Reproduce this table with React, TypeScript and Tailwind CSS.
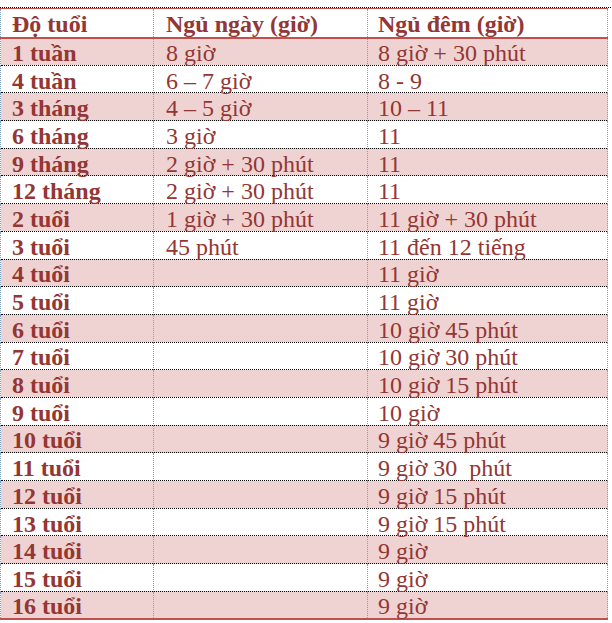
import React from 'react';

const rows: [string, string, string][] = [
  ['1 tuần', '8 giờ', '8 giờ + 30 phút'],
  ['4 tuần', '6 – 7 giờ', '8 - 9'],
  ['3 tháng', '4 – 5 giờ', '10 – 11'],
  ['6 tháng', '3 giờ', '11'],
  ['9 tháng', '2 giờ + 30 phút', '11'],
  ['12 tháng', '2 giờ + 30 phút', '11'],
  ['2 tuổi', '1 giờ + 30 phút', '11 giờ + 30 phút'],
  ['3 tuổi', '45 phút', '11 đến 12 tiếng'],
  ['4 tuổi', '', '11 giờ'],
  ['5 tuổi', '', '11 giờ'],
  ['6 tuổi', '', '10 giờ 45 phút'],
  ['7 tuổi', '', '10 giờ 30 phút'],
  ['8 tuổi', '', '10 giờ 15 phút'],
  ['9 tuổi', '', '10 giờ'],
  ['10 tuổi', '', '9 giờ 45 phút'],
  ['11 tuổi', '', '9 giờ 30\u00a0 phút'],
  ['12 tuổi', '', '9 giờ 15 phút'],
  ['13 tuổi', '', '9 giờ 15 phút'],
  ['14 tuổi', '', '9 giờ'],
  ['15 tuổi', '', '9 giờ'],
  ['16 tuổi', '', '9 giờ'],
];

export default function App() {
  return (
    <div className="min-h-[623px] bg-white pt-[7px] text-[#943634] font-['Liberation_Serif','Times_New_Roman',serif] text-[24px] leading-[20px]">
      <div className="w-[611px] border-t border-dotted border-black" />
      <table className="w-[607px] table-fixed border-collapse">
        <colgroup>
          <col className="w-[153px]" />
          <col className="w-[214px]" />
          <col className="w-[240px]" />
        </colgroup>
        <thead>
          <tr className="h-[29px] border-t border-solid border-t-[#c0504d] border-b-2 border-b-[#c0504d]">
            <th className="text-left font-bold pl-[11px] pt-[2px] border-l border-dotted border-l-[#7f9fcf]">Độ tuổi</th>
            <th className="text-left font-bold pl-[12px] pt-[2px] border-l border-dotted border-l-[#7f9fcf]">Ngủ ngày (giờ)</th>
            <th className="text-left font-bold pl-[10px] pt-[2px] border-l border-r border-dotted border-l-[#7f9fcf] border-r-[#7f9fcf]">Ngủ đêm (giờ)</th>
          </tr>
        </thead>
        <tbody>
          {rows.map((r, i) => {
            const last = i === rows.length - 1;
            return (
              <tr
                key={i}
                className={`h-[27.7px] ${i % 2 === 0 ? 'bg-[#efd3d2]' : 'bg-white'} ${
                  last ? 'border-b-2 border-solid border-b-[#c0504d]' : 'border-b border-dotted border-b-black'
                }`}
              >
                <td className="font-bold pl-[11px] pt-[3px] border-l border-dotted border-l-[#7f9fcf]">{r[0]}</td>
                <td className="pl-[12px] pt-[3px] border-l border-dotted border-l-[#7f9fcf]">{r[1]}</td>
                <td className="pl-[10px] pt-[3px] border-l border-r border-dotted border-l-[#7f9fcf] border-r-[#7f9fcf]">{r[2]}</td>
              </tr>
            );
          })}
        </tbody>
      </table>
    </div>
  );
}
